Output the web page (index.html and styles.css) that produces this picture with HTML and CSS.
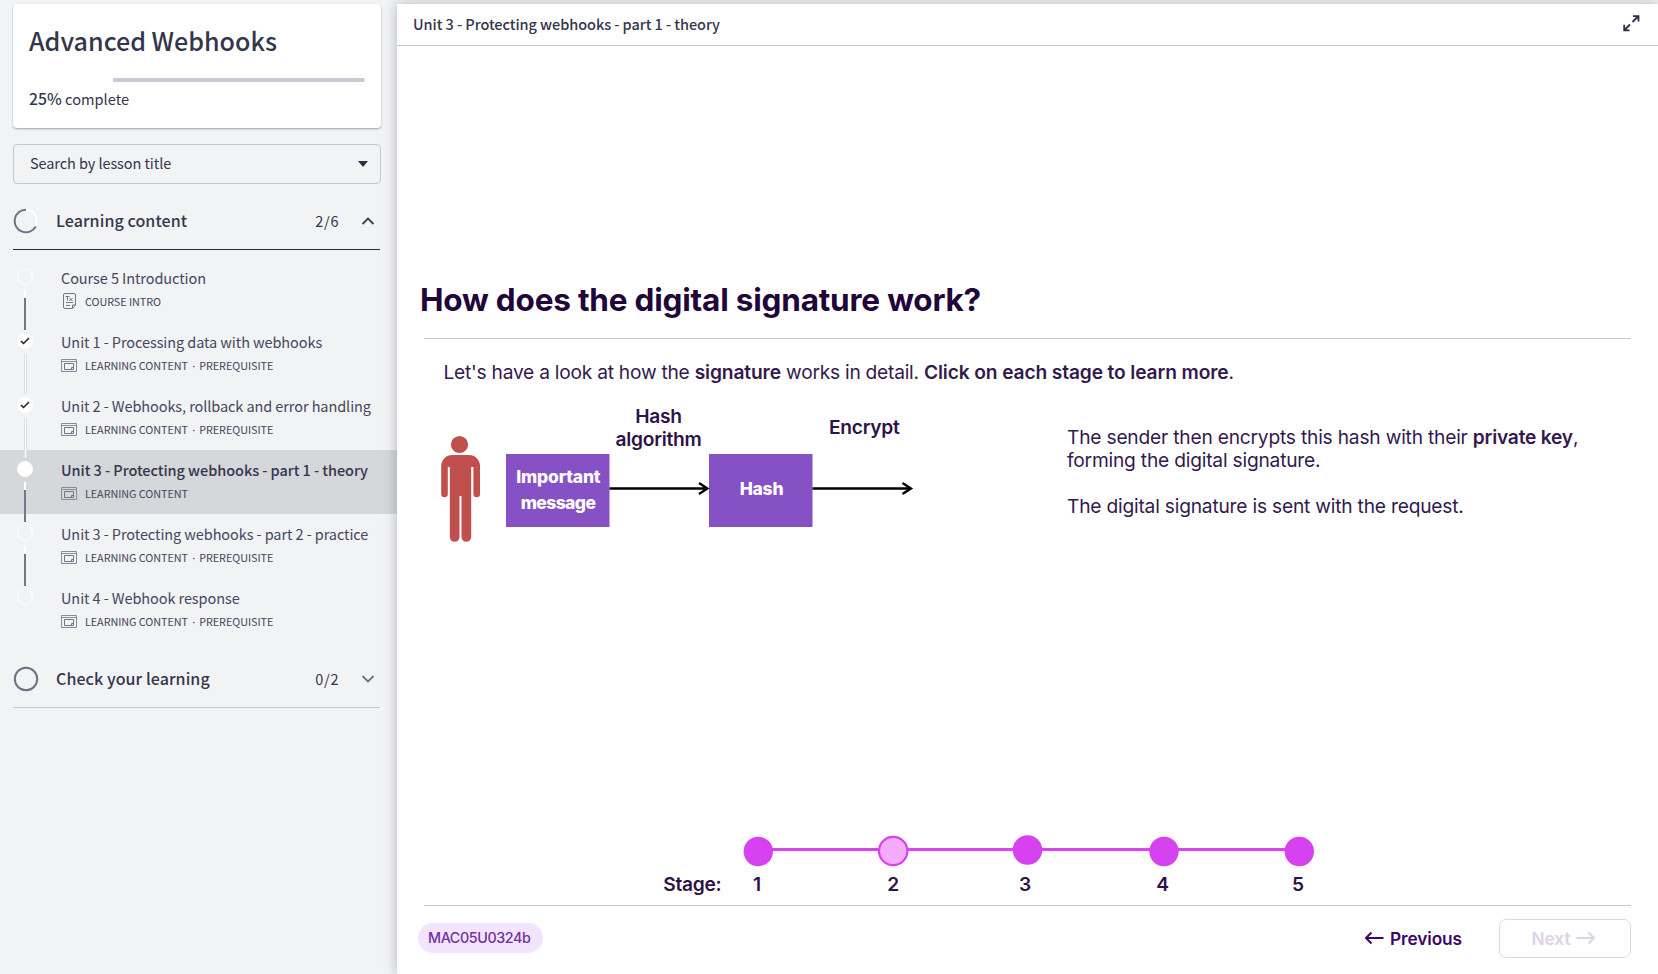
FILE: index.html
```html
<!DOCTYPE html>
<html lang="en">
<head>
<meta charset="utf-8">
<title>Advanced Webhooks</title>
<link rel="stylesheet" href="styles.css">
</head>
<body>
<svg width="0" height="0" class="defs">
  <symbol id="lesson" viewBox="0 0 16 13"><path d="M.5.5h15v12H.5zM.5 2.500h15" fill="none" stroke="#8a8b99"/><path d="M3.500 4.500h9v6h-9zM12.500 8.500h-2v2" fill="none" stroke="#747585"/></symbol>
  <symbol id="doc" viewBox="0 0 13 16"><path d="M2 .5h9a1.500 1.500 0 0 1 1.500 1.500v10l-3 3.500H2A1.500 1.500 0 0 1 .5 14V2A1.500 1.500 0 0 1 2 .5zM12.500 12h-3v3.500M3 9.500h7M3 12.500h4M2.500 3.500h4M4.500 3.500v4M6.500 5l3 3M9.500 5l-3 3" fill="none" stroke="#747585"/></symbol>
</svg>
<div class="app">
  <aside class="sidebar">
    <section class="card">
      <h1 class="course">Advanced Webhooks</h1>
      <div class="bar"><div class="bar-rest"></div></div>
      <p class="done"><b>25%</b> complete</p>
    </section>
    <div class="search"><span>Search by lesson title</span><svg width="10" height="6"><path d="M0 0h10L5 6z" fill="#2d2f45"/></svg></div>
    <div class="group open">
      <svg class="ring" width="26" height="26"><circle cx="13" cy="13" r="11" fill="none" stroke="#fff" stroke-width="1.500"/><path d="M13 1.700A11.300 11.300 0 1 0 22.800 18.600" fill="none" stroke="#6f7083" stroke-width="2"/></svg>
      <h2>Learning content</h2><span class="count">2/6</span>
      <svg class="chev" width="14" height="8"><path d="M1.500 7L7 1.500 12.500 7" fill="none" stroke="#3c3e53" stroke-width="1.800"/></svg>
    </div>
    <ul class="lessons">
      <li><div class="rail"><i class="dot"></i><i class="link dark"></i></div><div class="lesson"><h3>Course 5 Introduction</h3><p><svg width="16" height="16"><use href="#doc" x="2" width="13" height="16"/></svg><span>COURSE INTRO</span></p></div></li>
      <li><div class="rail"><i class="dot full"><svg width="10" height="8"><path d="M1 4l2.500 2.500L9 1" fill="none" stroke="#222" stroke-width="1.500"/></svg></i><i class="link"></i></div><div class="lesson"><h3>Unit 1 - Processing data with webhooks</h3><p><svg width="16" height="13"><use href="#lesson" width="16" height="13"/></svg><span>LEARNING CONTENT <i class="sep">·</i> PREREQUISITE</span></p></div></li>
      <li><div class="rail"><i class="dot full"><svg width="10" height="8"><path d="M1 4l2.500 2.500L9 1" fill="none" stroke="#222" stroke-width="1.500"/></svg></i><i class="link"></i></div><div class="lesson"><h3>Unit 2 - Webhooks, rollback and error handling</h3><p><svg width="16" height="13"><use href="#lesson" width="16" height="13"/></svg><span>LEARNING CONTENT <i class="sep">·</i> PREREQUISITE</span></p></div></li>
      <li class="current"><div class="rail"><i class="dot full"></i><i class="link dark"></i></div><div class="lesson"><h3>Unit 3 - Protecting webhooks - part 1 - theory</h3><p><svg width="16" height="13"><use href="#lesson" width="16" height="13"/></svg><span>LEARNING CONTENT</span></p></div></li>
      <li><div class="rail"><i class="dot"></i><i class="link dark"></i></div><div class="lesson"><h3>Unit 3 - Protecting webhooks - part 2 - practice</h3><p><svg width="16" height="13"><use href="#lesson" width="16" height="13"/></svg><span>LEARNING CONTENT <i class="sep">·</i> PREREQUISITE</span></p></div></li>
      <li><div class="rail"><i class="dot"></i></div><div class="lesson"><h3>Unit 4 - Webhook response</h3><p><svg width="16" height="13"><use href="#lesson" width="16" height="13"/></svg><span>LEARNING CONTENT <i class="sep">·</i> PREREQUISITE</span></p></div></li>
    </ul>
    <div class="group">
      <svg class="ring" width="26" height="26"><circle cx="13" cy="13" r="11.200" fill="none" stroke="#6f7083" stroke-width="2"/></svg>
      <h2>Check your learning</h2><span class="count">0/2</span>
      <svg class="chev" width="14" height="8"><path d="M1.500 1L7 6.500 12.500 1" fill="none" stroke="#6f7083" stroke-width="1.800"/></svg>
    </div>
  </aside>
  <main class="panel">
    <header class="top"><span>Unit 3 - Protecting webhooks - part 1 - theory</span>
      <svg width="17" height="17"><path d="M9.500 7l5.500-5.500M10 1.200h5.500V6.500M7 9.500l-5.500 5.500M1.200 9.800v5.500H6.500" fill="none" stroke="#2d2f45" stroke-width="1.800"/></svg>
    </header>
    <article class="slide">
      <h2 class="title"><span>How does the digital signature work?</span></h2>
      <p class="lead">Let's have a look at how the <b>signature</b> works in detail. <b>Click on each stage to learn more</b>.</p>
      <div class="row">
        <svg class="diagram" width="500" height="150" viewBox="430 400 500 150">
          <g fill="#c0504d"><circle cx="459.500" cy="444.500" r="8.600"/><path d="M450.500 455h18.500a11 11 0 0 1 11 11v28a3.300 3.300 0 0 1-6.600 0v-27h-2.200v70a4.700 4.700 0 0 1-9.700 0V496h-2v41a4.700 4.700 0 0 1-9.700 0V467h-2v27a3.300 3.300 0 0 1-6.600 0v-28a11 11 0 0 1 11-11z"/></g>
          <path d="M506 454h103.500v73H506zM709 454h103.500v73H709z" fill="#8751c6"/>
          <path d="M609.500 488.500h97M699 483l8.500 5.500-8.500 5.500M812.500 488.500h97.500M902.500 483l8.500 5.500-8.500 5.500" fill="none" stroke="#000" stroke-width="2.300"/>
          <g class="lbl"><text x="658.500" y="423">Hash</text><text x="658.500" y="446">algorithm</text><text x="864.300" y="434">Encrypt</text></g>
          <g class="box"><text x="558.300" y="483">Important</text><text class="tight" x="558" y="508.500">message</text><text x="761.500" y="495">Hash</text></g>
        </svg>
        <div class="note"><p>The sender then encrypts this hash with their <b>private key</b>,<br>forming the digital signature.</p><p>The digital signature is sent with the request.</p></div>
      </div>
      <svg class="stages" width="680" height="70" viewBox="650 832 680 70">
        <path d="M758 849.500h541" stroke="#d944f0" stroke-width="2.800"/>
        <g fill="#d641f0"><circle cx="758.300" cy="851.500" r="14.700"/><circle cx="1027.500" cy="850" r="14.700"/><circle cx="1164" cy="851.500" r="14.700"/><circle cx="1299.300" cy="851.500" r="14.700"/></g>
        <circle cx="893.200" cy="851" r="14.200" fill="#f4abfb" stroke="#d641f0" stroke-width="2.200"/>
        <g class="lbl"><text x="692.300" y="891">Stage:</text><text x="757" y="891">1</text><text x="893" y="891">2</text><text x="1025" y="891">3</text><text x="1162.500" y="891">4</text><text x="1298" y="891">5</text></g>
      </svg>
      <footer class="foot"><span class="chip">MAC05U0324b</span>
        <a class="prev"><svg width="20" height="14"><path d="M19.500 7H2M7.500 1.500L2 7l5.500 5.500" fill="none" stroke="#3b0764" stroke-width="2"/></svg><span>Previous</span></a>
        <a class="next"><span>Next</span><svg width="20" height="14"><path d="M.5 7H18M12.500 1.500L18 7l-5.500 5.500" fill="none" stroke="#ddd2e8" stroke-width="2"/></svg></a>
      </footer>
    </article>
  </main>
</div>
</body>
</html>
```
FILE: styles.css
```css
* { box-sizing: border-box; }
body { margin: 0; width: 1658px; height: 974px; overflow: hidden; background: #f1f3f5; color: #34364c; font-family: "Noto Sans CJK SC", "Noto Sans", sans-serif; }
h1, h2, h3, p, ul { margin: 0; padding: 0; }
.defs { display: block; }
.app { display: flex; height: 974px; padding-top: 4px; }
.sidebar { width: 397px; }
.card { margin: 0 16px 0 13px; width: 368px; height: 124px; padding: 18px 16px 0; background: #fff; border-radius: 4px; box-shadow: 0 1px 2px rgba(40, 42, 60, .4); }
.course { font-size: 25.100px; line-height: 36px; font-weight: 500; white-space: nowrap; }
.bar { height: 4px; margin-top: 20px; padding-left: 84px; }
.bar-rest { height: 4px; background: #c9cad6; border-radius: 0 2px 2px 0; }
.done { margin-top: 6px; font-size: 14.600px; line-height: 22px; }
.done b { font-size: 15.800px; font-weight: 500; }
.search { display: flex; justify-content: space-between; align-items: center; width: 368px; height: 40px; margin: 16px 0 0 13px; padding: 0 12px 0 16px; border: 1px solid #c6c7d3; border-radius: 4px; font-size: 14.500px; letter-spacing: -.08px; }
.search span { padding-bottom: 3px; }
.group { display: flex; align-items: center; width: 367px; height: 56px; margin-left: 13px; padding-bottom: 1px; border-bottom: 1px solid #c6c7d3; }
.group.open { height: 66px; padding: 9px 0 0; border-bottom: 1px solid #2d2f45; }
.group h2 { flex: 1; margin-left: 17px; padding-bottom: 2px; font-size: 16px; font-weight: 500; letter-spacing: .09px; }
.count { padding-bottom: 1px; font-size: 14.500px; letter-spacing: .85px; }
.chev { margin: 0 5px 0 21.500px; }
.lessons { list-style: none; padding-top: 8px; margin-bottom: 10px; }
.lessons li { display: flex; height: 64px; padding-top: 11px; color: #45475c; }
.lessons li.current { background: #d5d7db; }
.rail { display: flex; flex-direction: column; align-items: center; width: 16px; height: 64px; margin: 0 28px 0 17px; }
.lesson { margin-top: -1px; }
.dot { display: flex; align-items: center; justify-content: center; flex: none; width: 16px; height: 16px; border: 1px solid #fff; border-radius: 50%; }
.dot.full { background: #fff; }
.link { flex: none; width: 3px; height: 40px; margin-top: 5px; border: solid #dcdde3; border-width: 0 1px; background: #fff; }
.link.dark { width: 2px; border: 0; background: linear-gradient(#fff 8px, #757687 8px); }
.lessons h3 { font-size: 14.500px; line-height: 20px; font-weight: 400; letter-spacing: -.083px; white-space: nowrap; }
.lessons .current h3 { font-weight: 500; letter-spacing: -.055px; color: #34364c; }
.lessons p { display: flex; align-items: center; gap: 8px; height: 16px; margin-top: 5px; font-size: 10.800px; line-height: 16px; letter-spacing: -.05px; white-space: nowrap; }
.sep { display: inline-block; width: 6.500px; font-family: "Noto Sans", sans-serif; font-style: normal; text-align: center; }
.panel { flex: 1; display: flex; flex-direction: column; background: #fff; box-shadow: 0 0 12px rgba(40, 42, 60, .3); }
.top { display: flex; align-items: center; justify-content: space-between; height: 42px; padding: 0 18px 1px 16px; border-bottom: 1px solid #c6c7d3; font-size: 14.500px; font-weight: 500; letter-spacing: -.055px; }
.top span { padding-bottom: 1px; }
.top svg { margin-bottom: 1px; }
.slide { flex: 1; padding: 233px 27px 0; color: #331a4d; font-family: Inter, sans-serif; }
.title { height: 60px; padding-top: 1px; border-bottom: 1px solid #cdc7c7; font-size: 31.500px; line-height: 40px; font-weight: 700; letter-spacing: -.2px; color: #21063a; }
.title span { margin-left: -4px; }
.lead { padding: 21px 0 0 19.500px; font-size: 19.200px; line-height: 24px; letter-spacing: -.25px; white-space: nowrap; }
.lead b { letter-spacing: -.13px; }
.row { display: flex; height: 448px; }
.diagram { margin: 16px 0 0 6px; }
.note { margin: 42px 0 0 137px; font-size: 19.200px; line-height: 23px; letter-spacing: -.21px; white-space: nowrap; }
.note p + p { margin-top: 23px; }
b { font-weight: 600; }
.lbl text { font: 600 19.200px Inter, sans-serif; fill: #2e1248; text-anchor: middle; letter-spacing: -.28px; }
.box text { font: 800 17.500px Inter, sans-serif; fill: #fff; text-anchor: middle; letter-spacing: -.2px; }
.box .tight { letter-spacing: -.6px; }
.stages { display: block; margin: 0 0 3px 226px; }
.foot { display: flex; align-items: center; height: 65px; border-top: 1px solid #cdc7c7; }
.chip { margin-left: -6px; padding: 0 10px; width: 125px; height: 30px; border-radius: 15px; background: #f1e4fb; color: #7130a0; font-size: 14.300px; line-height: 30px; font-weight: 500; letter-spacing: -.4px; }
.prev { display: flex; align-items: center; gap: 6px; margin-left: auto; font-size: 17.300px; font-weight: 600; letter-spacing: -.1px; color: #3b0764; }
.next { display: flex; align-items: center; justify-content: center; gap: 6px; width: 132px; height: 39px; margin-left: 37px; padding-right: 2px; border: 1px solid #e0d6ea; border-radius: 7px; font-size: 17.300px; font-weight: 600; letter-spacing: -.1px; color: #ddd2e8; }
```
